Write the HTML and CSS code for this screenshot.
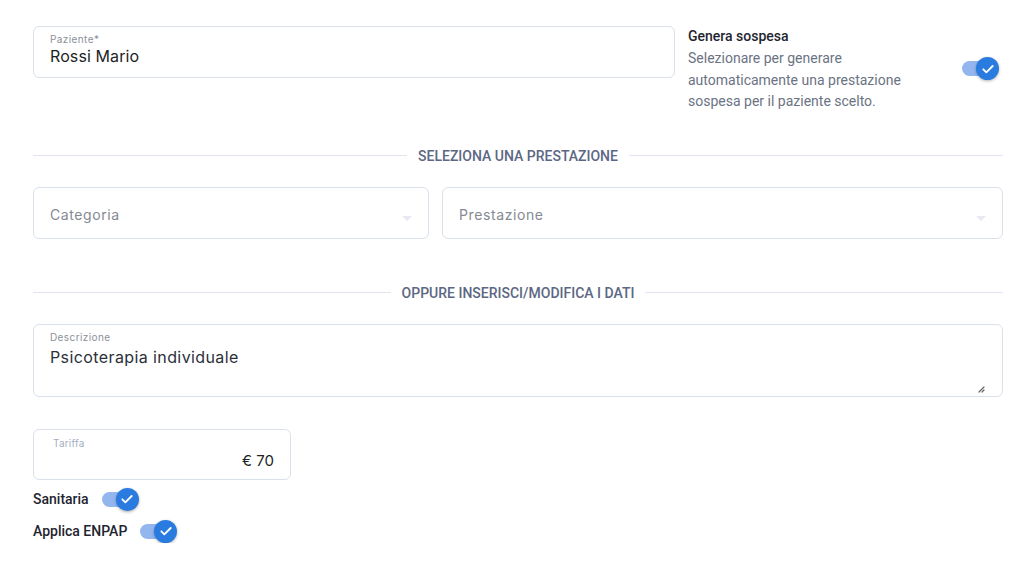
FILE: index.html
```html
<!DOCTYPE html>
<html lang="it">
<head>
<meta charset="utf-8">
<title>Prestazione</title>
<link rel="stylesheet" href="styles.css">
</head>
<body>
<div class="page">
  <div class="top-row">
    <div class="field field-patient">
      <span class="field-label">Paziente*</span>
      <span class="field-value">Rossi Mario</span>
    </div>
    <div class="suspend">
      <div class="suspend-text">
        <div class="suspend-title">Genera sospesa</div>
        <div class="suspend-desc">Selezionare per generare automaticamente una prestazione sospesa per il paziente scelto.</div>
      </div>
      <div class="toggle">
        <span class="track"></span>
        <span class="knob"><svg viewBox="0 0 24 24" width="16" height="16"><path d="M5 12.5l4.5 4.5L19 7.5" fill="none" stroke="#fff" stroke-width="2.8" stroke-linecap="round" stroke-linejoin="round"/></svg></span>
      </div>
    </div>
  </div>

  <div class="divider divider-1"><span>Seleziona una prestazione</span></div>

  <div class="select-row">
    <div class="select select-cat">
      <span class="placeholder">Categoria</span>
      <span class="caret"></span>
    </div>
    <div class="select select-prest">
      <span class="placeholder">Prestazione</span>
      <span class="caret"></span>
    </div>
  </div>

  <div class="divider divider-2"><span>Oppure inserisci/modifica i dati</span></div>

  <div class="field field-desc">
    <span class="field-label">Descrizione</span>
    <span class="field-value value-desc">Psicoterapia individuale</span>
    <svg class="resize" viewBox="0 0 8 8" width="8" height="8"><path d="M7 2L2 7M7 5L5 7" stroke="#666" stroke-width="1.2" stroke-linecap="round"/></svg>
  </div>

  <div class="field field-tariff">
    <span class="field-label label-tariff">Tariffa</span>
    <span class="tariff-value">€ 70</span>
  </div>

  <div class="switch-row row-san">
    <span class="switch-label">Sanitaria</span>
    <div class="toggle">
      <span class="track"></span>
      <span class="knob"><svg viewBox="0 0 24 24" width="16" height="16"><path d="M5 12.5l4.5 4.5L19 7.5" fill="none" stroke="#fff" stroke-width="2.8" stroke-linecap="round" stroke-linejoin="round"/></svg></span>
    </div>
  </div>
  <div class="switch-row row-enpap">
    <span class="switch-label">Applica ENPAP</span>
    <div class="toggle">
      <span class="track"></span>
      <span class="knob"><svg viewBox="0 0 24 24" width="16" height="16"><path d="M5 12.5l4.5 4.5L19 7.5" fill="none" stroke="#fff" stroke-width="2.8" stroke-linecap="round" stroke-linejoin="round"/></svg></span>
    </div>
  </div>
</div>
</body>
</html>
```

FILE: styles.css
```css
* { box-sizing: border-box; }
html, body { margin: 0; padding: 0; background: #fff; }
body { font-family: Roboto, "Liberation Sans", sans-serif; color: #1f2937; }

.page {
  width: 1024px;
  padding: 26px 21px 0 33px;
}

.top-row {
  display: flex;
  gap: 13px;
  align-items: flex-start;
}

.field {
  border: 1px solid #dbe1ea;
  border-radius: 6px;
  background: #fff;
  display: flex;
  flex-direction: column;
}

.field-patient {
  width: 642px;
  height: 52px;
  padding: 6px 16px 0 16px;
}

.field-label {
  font-family: Inter, "Noto Sans", sans-serif;
  font-size: 10px;
  letter-spacing: 0.4px;
  color: #8a8f98;
  line-height: 12px;
}

.field-value {
  font-family: Inter, "Noto Sans", sans-serif;
  font-size: 16px;
  color: #1c1f24;
  line-height: 22px;
  letter-spacing: 0.1px;
}

.suspend {
  flex: 1;
  display: flex;
  align-items: center;
  justify-content: space-between;
  padding-top: 1px;
}

.suspend-title {
  font-size: 14px;
  font-weight: 500;
  color: #1f2530;
  line-height: 18px;
}

.suspend-desc {
  font-size: 14px;
  color: #6b7383;
  line-height: 21.5px;
  width: 240px;
  margin-top: 3px;
}

.suspend .toggle { margin-top: -2px; margin-right: 4px; }

.toggle {
  position: relative;
  width: 37px;
  height: 23px;
  flex: none;
}
.track {
  position: absolute;
  left: 0;
  top: 4px;
  width: 30px;
  height: 15px;
  border-radius: 8px;
  background: #94b6ef;
}
.knob {
  position: absolute;
  right: 0;
  top: 0;
  width: 23px;
  height: 23px;
  border-radius: 50%;
  background: #2a7be0;
  box-shadow: 0 1px 3px rgba(0,0,0,0.3);
  display: flex;
  align-items: center;
  justify-content: center;
}

.divider {
  display: flex;
  align-items: center;
  gap: 11px;
  font-size: 14px;
  font-weight: 500;
  text-transform: uppercase;
  color: #5c6782;
  line-height: 16px;
}
.divider::before, .divider::after {
  content: "";
  flex: 1;
  height: 1px;
  background: #dfe4ee;
}
.divider-1 { margin-top: 35px; }
.divider-2 { margin-top: 46px; }

.select-row {
  display: flex;
  gap: 13px;
  margin-top: 23px;
}
.select {
  position: relative;
  height: 52px;
  border: 1px solid #dbe1ea;
  border-radius: 6px;
  display: flex;
  align-items: center;
  padding: 4px 0 0 16px;
}
.select-cat { width: 396px; }
.select-prest { flex: 1; }
.placeholder {
  font-family: Inter, "Noto Sans", sans-serif;
  font-size: 14px;
  color: #858a92;
  letter-spacing: 0.6px;
}
.caret {
  position: absolute;
  right: 16px;
  top: 28px;
  width: 0;
  height: 0;
  border-left: 5px solid transparent;
  border-right: 5px solid transparent;
  border-top: 5px solid #e6e9ef;
}

.field-desc {
  position: relative;
  margin-top: 23px;
  height: 73px;
  padding: 6px 16px 0 16px;
}
.value-desc { color: #2b303a; font-size: 16px; letter-spacing: 0.4px; margin-top: 3px; }
.resize {
  position: absolute;
  right: 17px;
  bottom: 3px;
}

.field-tariff {
  margin-top: 32px;
  width: 258px;
  height: 51px;
  padding: 7px 16px 0 19px;
}
.label-tariff { color: #a4aec2; font-size: 10px; letter-spacing: 0.2px; }
.tariff-value {
  font-family: Inter, "Noto Sans", sans-serif;
  font-size: 15px;
  color: #1c1f24;
  text-align: right;
  margin-top: 2px;
}

.switch-row {
  display: flex;
  align-items: center;
  gap: 13px;
}
.row-san { margin-top: 8px; }
.row-enpap { margin-top: 9px; }
.switch-label {
  font-size: 14px;
  font-weight: 500;
  color: #1f2530;
}
```
